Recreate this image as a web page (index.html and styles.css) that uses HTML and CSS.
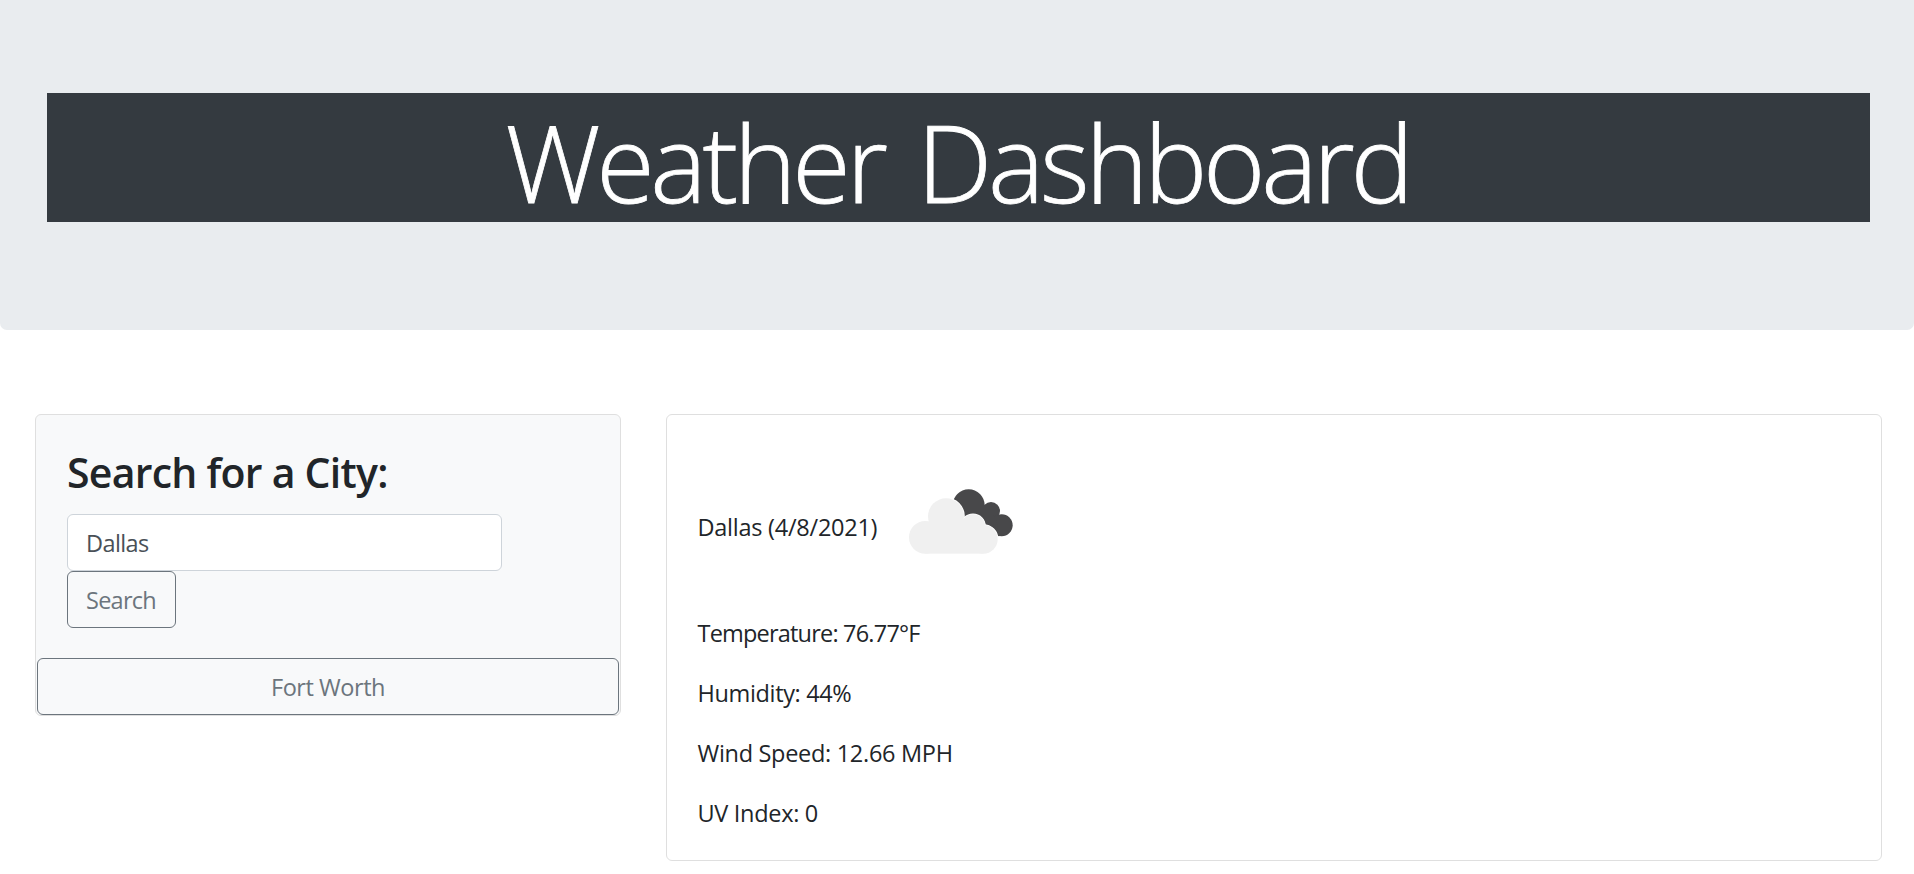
FILE: index.html
```html
<!DOCTYPE html>
<html lang="en">
<head>
<meta charset="utf-8">
<title>Weather Dashboard</title>
<link rel="stylesheet" href="styles.css">
</head>
<body>
<header class="jumbotron"><h1 class="title">Weather Dashboard</h1></header>
<main class="row">
  <aside class="card search-card">
    <form class="search-body">
      <h3 class="heading">Search for a City:</h3>
      <input class="city-input" type="text" value="Dallas" aria-label="City">
      <button class="btn search-btn" type="button">Search</button>
    </form>
    <button class="btn history-btn" type="button">Fort Worth</button>
  </aside>
  <section class="card weather-card">
    <div class="current">
      <span class="city-date">Dallas (4/8/2021)</span>
      <svg class="weather-icon" viewBox="0 0 390 270" aria-hidden="true">
        <g fill="#48484a">
          <circle cx="218" cy="91" r="48"/><circle cx="285" cy="108" r="27"/><circle cx="317" cy="151" r="33"/>
          <path d="M180 90L265 90L300 130L310 184L240 170Z"/>
        </g>
        <g class="front-cloud">
          <circle cx="88" cy="187" r="49"/><circle cx="150" cy="124" r="54"/><circle cx="231" cy="154" r="36"/><circle cx="262" cy="193" r="43"/>
          <rect x="88" y="150" width="174" height="86"/>
        </g>
        <g fill="#f0f0f0">
          <circle cx="88" cy="187" r="49"/><circle cx="150" cy="124" r="54"/><circle cx="231" cy="154" r="36"/><circle cx="262" cy="193" r="43"/>
          <rect x="88" y="150" width="174" height="86"/>
        </g>
      </svg>
    </div>
    <p class="stat temperature">Temperature: 76.77°F</p>
    <p class="stat humidity">Humidity: 44%</p>
    <p class="stat wind">Wind Speed: 12.66 MPH</p>
    <p class="stat uv">UV Index: 0</p>
  </section>
</main>
</body>
</html>
```
FILE: styles.css
```css
* { box-sizing: border-box; }
body {
  margin: 0;
  background: #fff;
  color: #212529;
  font: 400 23.5px/36px "Open Sans", "Noto Sans", sans-serif;
}
h1, h3, p { margin: 0; }
.jumbotron {
  height: 330px;
  padding: 93px 44px 0 47px;
  background: #e9ecef;
  border-radius: 0 0 7px 7px;
}
.title {
  height: 129px;
  padding-right: 2px;
  background: #343a40;
  color: #fff;
  font-size: 106.5px;
  font-weight: 300;
  line-height: 137px;
  letter-spacing: -4.3px;
  word-spacing: 10px;
  text-align: center;
  white-space: nowrap;
  -webkit-text-stroke: 0.8px #fff;
}
.row {
  display: flex;
  align-items: flex-start;
  gap: 45px;
  padding: 84px 32px 0 35px;
}
.card { border: 1px solid #dfdfdf; border-radius: 6px; }
.search-card { width: 586px; height: 302px; padding: 0 1px; background: #f8f9fa; }
.search-body {
  display: flex;
  flex-direction: column;
  align-items: flex-start;
  height: 243px;
  padding: 32px 30px 0;
}
.heading { height: 67px; font-size: 41px; font-weight: 600; line-height: 50px; letter-spacing: -0.75px; white-space: nowrap; }
.city-input {
  width: 435px;
  height: 57px;
  padding: 0 18px;
  border: 1px solid #ced4da;
  border-radius: 6px;
  background: #fff;
  color: #495057;
  font: inherit;
  letter-spacing: -0.6px;
}
.btn {
  height: 57px;
  padding: 0;
  border: 1px solid #6c757d;
  border-radius: 6px;
  background: transparent;
  color: #6c757d;
  font: inherit;
}
.search-btn { width: 109px; padding-right: 1px; letter-spacing: -0.75px; }
.history-btn { display: block; width: 100%; letter-spacing: -0.45px; }
.weather-card { flex: 1; height: 447px; padding: 48px 31px 0 30.5px; background: #fff; }
.current { display: flex; align-items: center; height: 127px; }
.city-date { width: 198px; letter-spacing: -0.25px; white-space: nowrap; }
.weather-icon { width: 130px; height: 90px; margin-bottom: 14px; }
.front-cloud { fill: #fff; stroke: #fff; stroke-width: 5px; }
.stat { height: 60px; padding-top: 24px; }
.temperature { margin-top: 1px; letter-spacing: -0.8px; }
.humidity { letter-spacing: -0.35px; }
.wind { letter-spacing: -0.3px; }
.uv { letter-spacing: -0.3px; }
```
